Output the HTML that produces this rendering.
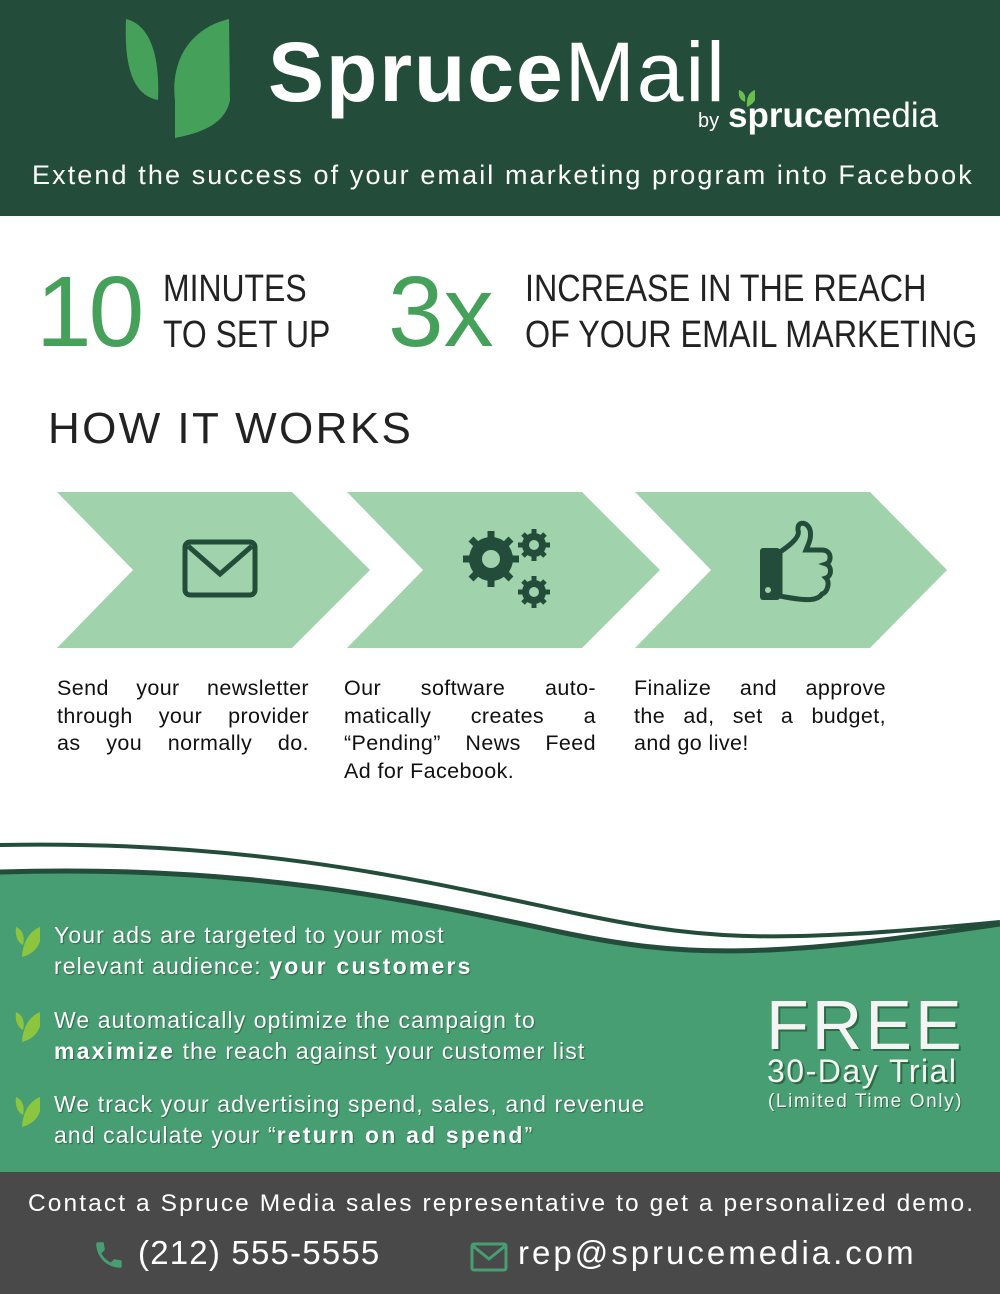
<!DOCTYPE html>
<html><head><meta charset="utf-8"><style>
*{margin:0;padding:0;box-sizing:border-box}
body{width:1000px;height:1294px;position:relative;overflow:hidden;background:#fff;font-family:"Liberation Sans",sans-serif}
.a{position:absolute;white-space:nowrap}
#hdr{position:absolute;left:0;top:0;width:1000px;height:216px;background:#234d3a}
.stat{color:#222;font-size:38px;line-height:46px;transform-origin:0 0}
.big{color:#45a05a;font-size:100px;line-height:100px;letter-spacing:-3px}
.step{font-size:21.5px;line-height:27.5px;color:#111;letter-spacing:0.4px;width:252px;white-space:normal}
.step div{text-align:justify;text-align-last:justify;white-space:nowrap}
.step div.l{text-align-last:left}
.bul{color:#fff;font-size:23px;line-height:31px;letter-spacing:1.1px;text-shadow:1px 1px 1px rgba(0,0,0,.35)}
.bul b{letter-spacing:2.2px}
</style></head><body>
<div id="hdr"></div>
<svg class="a" style="left:120px;top:15px" width="115" height="125" viewBox="0 0 115 125">
<path d="M6 4 C30 10 40 40 38 85 C12 80 4 50 6 4Z" fill="#45a05a"/>
<path d="M109 4 L110 85 C105 110 80 118 55 123 L55 96 C70 92 90 80 97 55 C95 80 80 95 55 100 L55 86 C50 40 75 12 109 4Z" fill="#45a05a"/>
</svg>
<div class="a" style="left:268px;top:22px;font-size:84px;line-height:100px;color:#fff;letter-spacing:2px"><b>Spruce</b><span style="font-weight:normal">Mail</span></div>
<div class="a" style="left:698px;top:110px;font-size:20px;color:#fff">by</div>
<div class="a" style="left:728px;top:96px;font-size:35px;color:#fff;letter-spacing:0px"><b>spruce</b>media</div>
<svg class="a" style="left:737px;top:88px" width="22" height="20"><path d="M2 2 C8 4 9 9 8 14 C3 12 1 8 2 2Z M18 2 L18 12 C16 16 12 18 10 19 C9 10 12 4 18 2Z" fill="#6abf4b"/></svg>
<div class="a" style="left:32px;top:160px;font-size:27px;color:#fff;letter-spacing:2.1px">Extend the success of your email marketing program into Facebook</div>

<div class="a big" style="left:36px;top:262px">10</div>
<div class="a stat" style="left:163px;top:266px;transform:scaleX(0.84)">MINUTES<br>TO SET UP</div>
<div class="a big" style="left:388px;top:262px;letter-spacing:0">3x</div>
<div class="a stat" style="left:525px;top:266px;transform:scaleX(0.85)">INCREASE IN THE REACH<br>OF YOUR EMAIL MARKETING</div>
<div class="a" style="left:48px;top:404px;font-size:44px;color:#222;letter-spacing:2.4px">HOW IT WORKS</div>

<svg class="a" style="left:0;top:490px" width="1000" height="160">
<g fill="#a0d3ab">
<polygon points="57,2 292,2 370,80 292,158 57,158 133,80"/>
<polygon points="347,2 582,2 660,80 582,158 347,158 423,80"/>
<polygon points="635,2 870,2 947,80 870,158 635,158 711,80"/>
</g>
<g fill="#234d3a">
<rect x="185" y="52" width="70" height="53" rx="5" fill="none" stroke="#234d3a" stroke-width="5"/>
<path d="M188 56 L220 84 L252 56" fill="none" stroke="#234d3a" stroke-width="5"/>
<circle cx="491" cy="69" r="22"/><circle cx="534" cy="55" r="12"/><circle cx="534" cy="102" r="12"/>
<g stroke="#234d3a" stroke-width="7"><line x1="463" y1="69" x2="519" y2="69"/><line x1="491" y1="41" x2="491" y2="97"/><line x1="471" y1="49" x2="511" y2="89"/><line x1="471" y1="89" x2="511" y2="49"/></g>
<g stroke="#234d3a" stroke-width="5"><line x1="518" y1="55" x2="550" y2="55"/><line x1="534" y1="39" x2="534" y2="71"/><line x1="523" y1="44" x2="545" y2="66"/><line x1="523" y1="66" x2="545" y2="44"/>
<line x1="518" y1="102" x2="550" y2="102"/><line x1="534" y1="86" x2="534" y2="118"/><line x1="523" y1="91" x2="545" y2="113"/><line x1="523" y1="113" x2="545" y2="91"/></g>
<circle cx="491" cy="69" r="9" fill="#a0d3ab"/><circle cx="534" cy="55" r="5" fill="#a0d3ab"/><circle cx="534" cy="102" r="5" fill="#a0d3ab"/>
<rect x="760" y="58" width="20" height="52" rx="3"/>
<path d="M780 62 C795 52 800 45 798 40 C797 30 808 32 810 40 C812 48 808 55 806 60 L822 60 C832 60 832 72 826 74 C832 76 832 86 826 88 C830 92 828 102 822 104 C818 110 810 112 780 106 Z" fill="none" stroke="#234d3a" stroke-width="5"/>
<circle cx="768" cy="100" r="3" fill="#a0d3ab"/>
</g></svg>

<div class="a step" style="left:57px;top:675px"><div>Send your newsletter</div><div>through your provider</div><div>as you normally do.</div></div>
<div class="a step" style="left:344px;top:675px"><div>Our software auto-</div><div>matically creates a</div><div>“Pending” News Feed</div><div class="l">Ad for Facebook.</div></div>
<div class="a step" style="left:634px;top:675px"><div>Finalize and approve</div><div>the ad, set a budget,</div><div class="l">and go live!</div></div>

<svg class="a" style="left:0;top:830px" width="1000" height="345">
<path d="M0 15 C250 10 420 50 560 80 C700 110 760 115 1000 92" fill="none" stroke="#234d3a" stroke-width="4"/>
<path d="M0 40 C250 32 420 70 560 100 C680 125 760 128 1000 92 L1000 345 L0 345Z" fill="#479e72"/>
<path d="M0 42 C250 34 420 72 560 102 C680 127 760 130 1000 94" fill="none" stroke="#234d3a" stroke-width="5"/>
</svg>
<svg class="a" style="left:14px;top:925px" width="30" height="240"><g fill="#8cc63f">
<path d="M2 2 C9 5 11 12 9 20 C3 17 1 10 2 2Z M26 2 L26 16 C23 26 15 30 8 32 C9 16 16 6 26 2Z"/>
<path transform="translate(0,85)" d="M2 2 C9 5 11 12 9 20 C3 17 1 10 2 2Z M26 2 L26 16 C23 26 15 30 8 32 C9 16 16 6 26 2Z"/>
<path transform="translate(0,170)" d="M2 2 C9 5 11 12 9 20 C3 17 1 10 2 2Z M26 2 L26 16 C23 26 15 30 8 32 C9 16 16 6 26 2Z"/></g></svg>
<div class="a bul" style="left:54px;top:920px">Your ads are targeted to your most<br>relevant audience: <b>your customers</b></div>
<div class="a bul" style="left:54px;top:1005px">We automatically optimize the campaign to<br><b>maximize</b> the reach against your customer list</div>
<div class="a bul" style="left:54px;top:1089px">We track your advertising spend, sales, and revenue<br>and calculate your “<b>return on ad spend</b>”</div>

<div class="a" style="left:766px;top:990px;font-size:70px;line-height:70px;color:#f4f4f4;letter-spacing:3px;text-shadow:2px 2px 0 #2d6b47">FREE</div>
<div class="a" style="left:767px;top:1054px;font-size:32px;line-height:34px;color:#f4f4f4;letter-spacing:1.5px;text-shadow:2px 2px 0 #2d6b47">30-Day Trial</div>
<div class="a" style="left:768px;top:1091px;font-size:19px;line-height:22px;color:#f4f4f4;letter-spacing:1.6px;text-shadow:1px 1px 0 #2d6b47">(Limited Time Only)</div>

<div class="a" style="left:0;top:1172px;width:1000px;height:122px;background:#4a4949"></div>
<div class="a" style="left:28px;top:1190px;font-size:24.5px;color:#fff;letter-spacing:2.1px">Contact a Spruce Media sales representative to get a personalized demo.</div>
<svg class="a" style="left:92px;top:1238px" width="34" height="34" viewBox="0 0 24 24"><path d="M6.6 10.8c1.4 2.8 3.8 5.1 6.6 6.6l2.2-2.2c.3-.3.7-.4 1-.2 1.1.4 2.3.6 3.6.6.6 0 1 .4 1 1V20c0 .6-.4 1-1 1C10.6 21 3 13.4 3 4c0-.6.4-1 1-1h3.5c.6 0 1 .4 1 1 0 1.3.2 2.5.6 3.6.1.3 0 .7-.2 1z" fill="#479e72"/></svg>
<div class="a" style="left:138px;top:1234px;font-size:33px;color:#fff;letter-spacing:1.2px">(212) 555-5555</div>
<svg class="a" style="left:470px;top:1242px" width="38" height="30"><rect x="2" y="2" width="34" height="26" rx="2" fill="none" stroke="#479e72" stroke-width="3"/><path d="M3 4 L19 17 L35 4" fill="none" stroke="#479e72" stroke-width="3"/></svg>
<div class="a" style="left:518px;top:1234px;font-size:33px;color:#fff;letter-spacing:3px">rep@sprucemedia.com</div>
</body></html>
